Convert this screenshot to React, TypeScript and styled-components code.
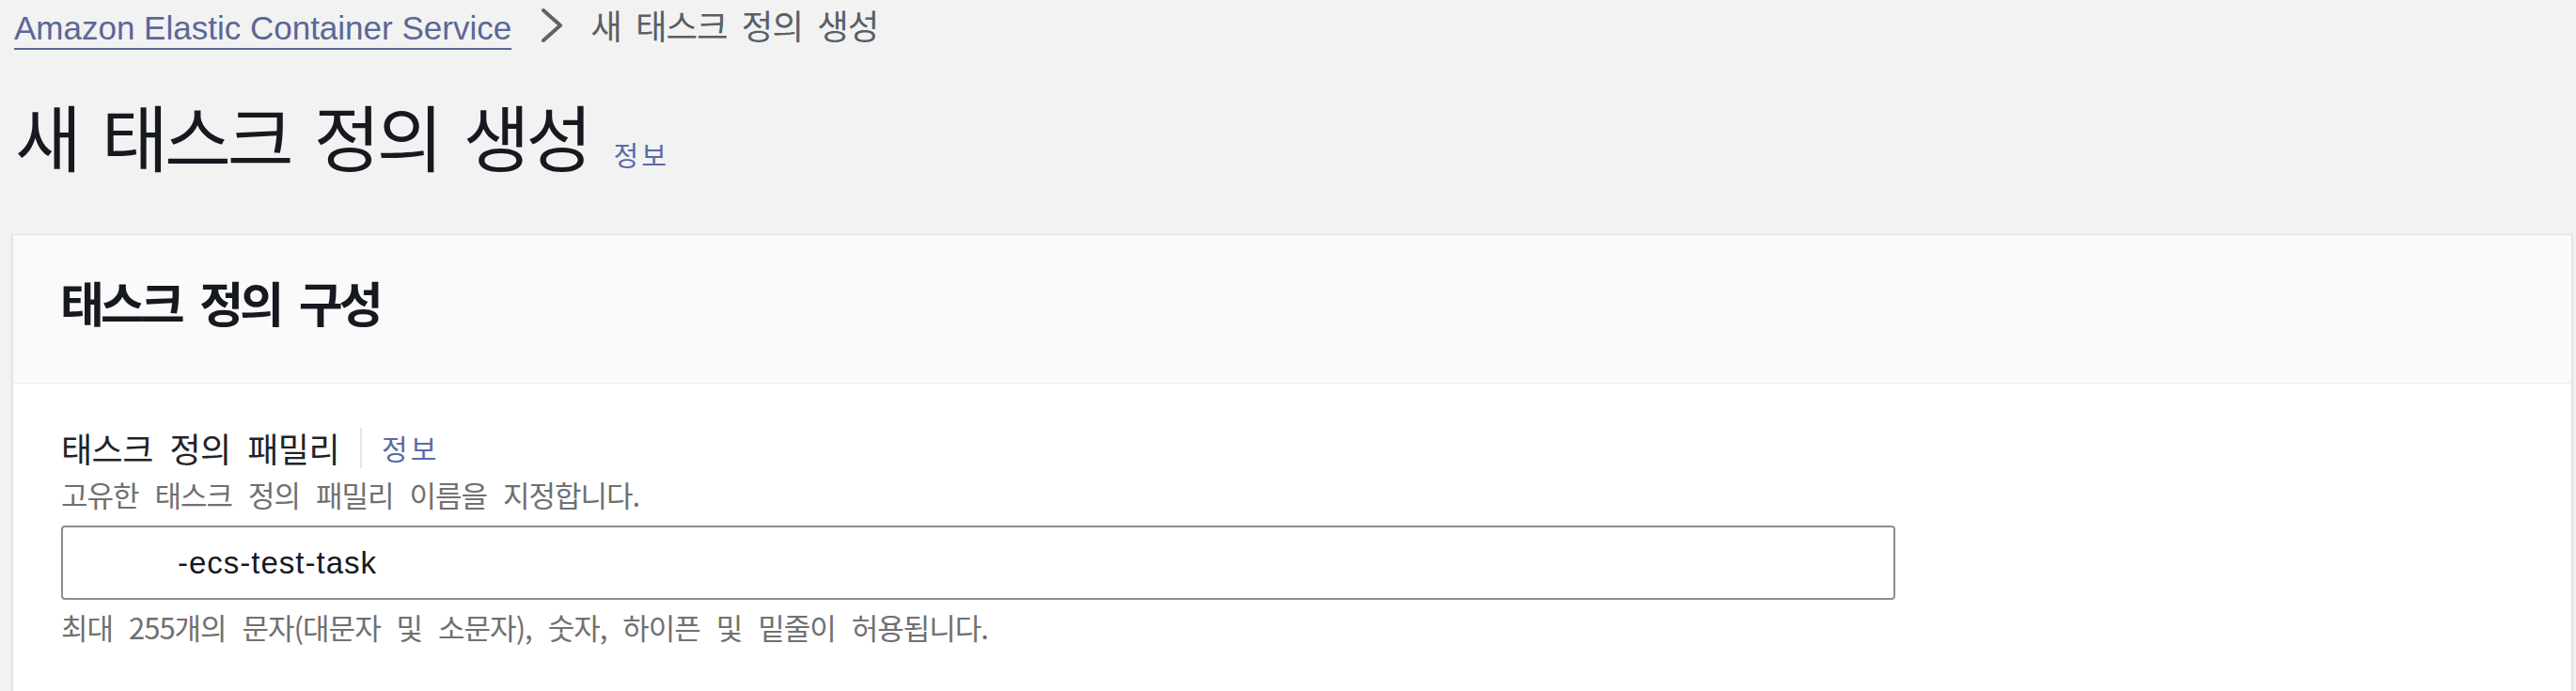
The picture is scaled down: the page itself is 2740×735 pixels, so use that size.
import React from "react";
import styled, { createGlobalStyle } from "styled-components";

const GlobalStyle = createGlobalStyle`
  html, body { margin: 0; padding: 0; background: #f2f2f2; }
  body {
    font-family: "Noto Sans CJK KR", "Liberation Sans", sans-serif;
    overflow: hidden;
  }
  * { box-sizing: border-box; }
`;

const KR = `"Noto Sans CJK KR", "Liberation Sans", sans-serif`;
const LATIN = `"Liberation Sans", "Noto Sans CJK KR", sans-serif`;

const Page = styled.div`
  padding: 7px 4px 0 13px;
  min-height: 735px;
  background: #f2f2f2;
`;

const Breadcrumbs = styled.nav`
  display: flex;
  align-items: baseline;
  height: 40px;
  padding-left: 2px;
`;

const CrumbLink = styled.a`
  font-family: ${LATIN};
  font-size: 35px;
  line-height: 40px;
  color: #5b6796;
  text-decoration: underline;
  text-decoration-thickness: 2px;
  text-underline-offset: 9px;
`;

const Chevron = styled.svg`
  align-self: center;
  width: 24px;
  height: 36px;
  margin: 0 29px 0 31px;
  flex: none;
`;

const CrumbCurrent = styled.span`
  font-family: ${KR};
  font-size: 36.5px;
  line-height: 40px;
  letter-spacing: -1px;
  word-spacing: 8px;
  color: #5a5f66;
`;

const TitleRow = styled.div`
  display: flex;
  align-items: baseline;
  margin-top: 57px;
  padding-left: 3px;
`;

const Title = styled.h1`
  margin: 0;
  font-family: ${KR};
  font-weight: 400;
  font-size: 77px;
  line-height: 80px;
  letter-spacing: -4px;
  word-spacing: 12px;
  color: #16191f;
`;

const InfoLink = styled.a<{ $size: number }>`
  font-family: ${KR};
  font-size: ${(p) => p.$size}px;
  letter-spacing: 3px;
  color: #5a6aa4;
  text-decoration: none;
`;

const TitleInfo = styled(InfoLink)`
  margin-left: 26px;
`;

const Card = styled.section`
  margin-top: 64px;
  background: #ffffff;
  border: 1px solid #e2e2e2;
  box-shadow: 0 1px 2px rgba(0, 28, 36, 0.18);
`;

const CardHeader = styled.header`
  background: #fafafa;
  border-bottom: 1px solid #eaeded;
  padding: 43px 50px 58px;
`;

const CardTitle = styled.h2`
  margin: 0;
  font-family: ${KR};
  font-weight: 700;
  font-size: 51px;
  line-height: 56px;
  letter-spacing: -4px;
  word-spacing: 12px;
  color: #16191f;
`;

const CardBody = styled.div`
  padding: 46px 51px 80px;
`;

const LabelRow = styled.div`
  display: flex;
  align-items: center;
  height: 44px;
`;

const Label = styled.label`
  font-family: ${KR};
  font-size: 36px;
  line-height: 44px;
  letter-spacing: -0.5px;
  word-spacing: 10px;
  color: #1f2328;
`;

const Divider = styled.span`
  width: 2px;
  height: 43px;
  background: #e4e4e4;
  margin: 0 21px 0 22px;
`;

const Hint = styled.div<{ $gap: number }>`
  margin-top: ${(p) => p.$gap}px;
  font-family: ${KR};
  font-size: 31px;
  line-height: 38px;
  letter-spacing: -1px;
  word-spacing: 11px;
  color: #707070;
`;

const TextInput = styled.input<{ $indent: number }>`
  display: block;
  margin-top: 14px;
  width: 1951px;
  height: 79px;
  padding: 0 20px 0 ${(p) => p.$indent}px;
  border: 2px solid #8d8d8d;
  border-radius: 4px;
  background: #ffffff;
  font-family: ${LATIN};
  font-size: 33px;
  letter-spacing: 1px;
  color: #16191f;
  outline: none;
`;

export default function App() {
  return (
    <>
      <GlobalStyle />
      <Page>
        <Breadcrumbs>
          <CrumbLink href="#">Amazon Elastic Container Service</CrumbLink>
          <Chevron viewBox="0 0 24 36">
            <path
              d="M3 2 L21 18 L3 34"
              fill="none"
              stroke="#5f6368"
              strokeWidth="4"
              strokeLinecap="round"
              strokeLinejoin="round"
            />
          </Chevron>
          <CrumbCurrent>새 태스크 정의 생성</CrumbCurrent>
        </Breadcrumbs>

        <TitleRow>
          <Title>새 태스크 정의 생성</Title>
          <TitleInfo href="#" $size={29}>
            정보
          </TitleInfo>
        </TitleRow>

        <Card>
          <CardHeader>
            <CardTitle>태스크 정의 구성</CardTitle>
          </CardHeader>
          <CardBody>
            <LabelRow>
              <Label>태스크 정의 패밀리</Label>
              <Divider />
              <InfoLink href="#" $size={30}>
                정보
              </InfoLink>
            </LabelRow>
            <Hint $gap={9}>고유한 태스크 정의 패밀리 이름을 지정합니다.</Hint>
            <TextInput $indent={122} readOnly value="-ecs-test-task" />
            <Hint $gap={10}>
              최대 255개의 문자(대문자 및 소문자), 숫자, 하이픈 및 밑줄이 허용됩니다.
            </Hint>
          </CardBody>
        </Card>
      </Page>
    </>
  );
}
